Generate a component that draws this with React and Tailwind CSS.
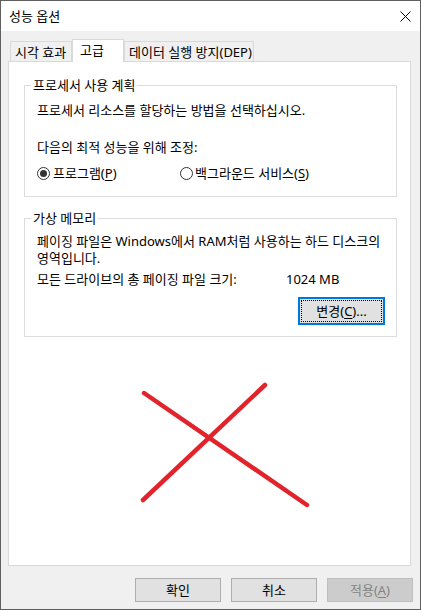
const font = { fontFamily: '"Noto Sans", "Noto Sans CJK KR", sans-serif' };

const Mn = ({ children }) => <span className="underline underline-offset-2">{children}</span>;

const Radio = ({ checked }) => (
  <span className="w-[13px] h-[13px] rounded-full border border-[#333] bg-white flex items-center justify-center shrink-0">
    {checked && <span className="w-[7px] h-[7px] rounded-full bg-[#333]" />}
  </span>
);

const GroupBox = ({ legend, className, children }) => (
  <div className={`relative w-[373px] border border-[#dcdcdc] ${className}`}>
    <span className="absolute -top-[9px] left-[6px] bg-white px-[2px] leading-[16px] whitespace-nowrap">
      {legend}
    </span>
    {children}
  </div>
);

const DialogButton = ({ children, disabled }) => (
  <button
    className={`w-[86px] h-[24px] border flex items-center justify-center leading-none ${
      disabled
        ? 'bg-[#cccccc] border-[#bfbfbf] text-[#838383]'
        : 'bg-[#e1e1e1] border-[#adadad] text-black'
    }`}
  >
    {children}
  </button>
);

export default function App() {
  return (
    <div
      className="w-[421px] h-[610px] border border-[#5f5f5f] bg-[#f0f0f0] flex flex-col text-[13px] text-black"
      style={font}
    >
      {/* title bar */}
      <div className="h-[30px] bg-white flex items-center justify-between pl-[8px] pr-[9px] shrink-0">
        <span className="leading-[16px]">성능 옵션</span>
        <svg width="11" height="11" viewBox="0 0 11 11">
          <path d="M0.5 0.5 L10.5 10.5 M10.5 0.5 L0.5 10.5" stroke="#000" strokeWidth="1" />
        </svg>
      </div>

      {/* tabs */}
      <div className="pl-[9px] pt-[8px] flex items-end shrink-0">
        <div className="w-[62px] h-[20px] border border-b-0 border-[#d9d9d9] bg-[#f0f0f0] flex items-center pl-[4px] leading-[16px] whitespace-nowrap">
          시각 효과
        </div>
        <div className="relative z-10 -mb-px w-[52px] h-[23px] border border-b-0 border-[#d9d9d9] bg-white flex items-center pl-[7px] pb-[3px] leading-[16px]">
          고급
        </div>
        <div className="w-[130px] h-[20px] border border-b-0 border-[#d9d9d9] bg-[#f0f0f0] flex items-center pl-[4px] leading-[16px] whitespace-nowrap">
          데이터 실행 방지(DEP)
        </div>
      </div>

      {/* panel */}
      <div className="ml-[7px] w-[403px] h-[505px] border border-[#d9d9d9] bg-white pl-[15px] pt-[23px] shrink-0">
        <GroupBox legend="프로세서 사용 계획" className="h-[112px] pl-[12px]">
          <div className="mt-[16px] leading-[16px]">프로세서 리소스를 할당하는 방법을 선택하십시오.</div>
          <div className="mt-[21px] leading-[16px]">다음의 최적 성능을 위해 조정:</div>
          <div className="mt-[10px] flex items-center leading-[16px]">
            <div className="w-[143px] flex items-center gap-[3px]">
              <Radio checked />
              <span>
                프로그램(<Mn>P</Mn>)
              </span>
            </div>
            <div className="flex items-center gap-[2px]">
              <Radio />
              <span>
                백그라운드 서비스(<Mn>S</Mn>)
              </span>
            </div>
          </div>
        </GroupBox>

        <GroupBox legend="가상 메모리" className="mt-[21px] h-[119px] pl-[12px]">
          <div className="mt-[14px] leading-[17px] whitespace-nowrap">
            페이징 파일은 Windows에서 RAM처럼 사용하는 하드 디스크의
            <br />
            영역입니다.
          </div>
          <div className="mt-[4px] flex leading-[16px] whitespace-nowrap">
            <span className="w-[249px]">모든 드라이브의 총 페이징 파일 크기:</span>
            <span>1024 MB</span>
          </div>
          <div className="mt-[10px] flex justify-end pr-[11px]">
            <button className="w-[87px] h-[28px] border-2 border-[#0078d7] bg-[#e1e1e1] p-[1px]">
              <span className="h-full w-full border border-dotted border-black flex items-center justify-center leading-none">
                변경(<Mn>C</Mn>)...
              </span>
            </button>
          </div>
        </GroupBox>

        <svg className="mt-[43px] ml-[116px] block" width="172" height="130" viewBox="0 0 172 130">
          <path d="M4 13 L167 125" stroke="#e3232b" strokeWidth="4.5" strokeLinecap="round" />
          <path d="M3 120 L125 5" stroke="#e3232b" strokeWidth="4.5" strokeLinecap="round" />
        </svg>
      </div>

      {/* dialog buttons */}
      <div className="mt-[12px] flex justify-end gap-[10px] pr-[7px] shrink-0">
        <DialogButton>확인</DialogButton>
        <DialogButton>취소</DialogButton>
        <DialogButton disabled>
          적용(<Mn>A</Mn>)
        </DialogButton>
      </div>
    </div>
  );
}
